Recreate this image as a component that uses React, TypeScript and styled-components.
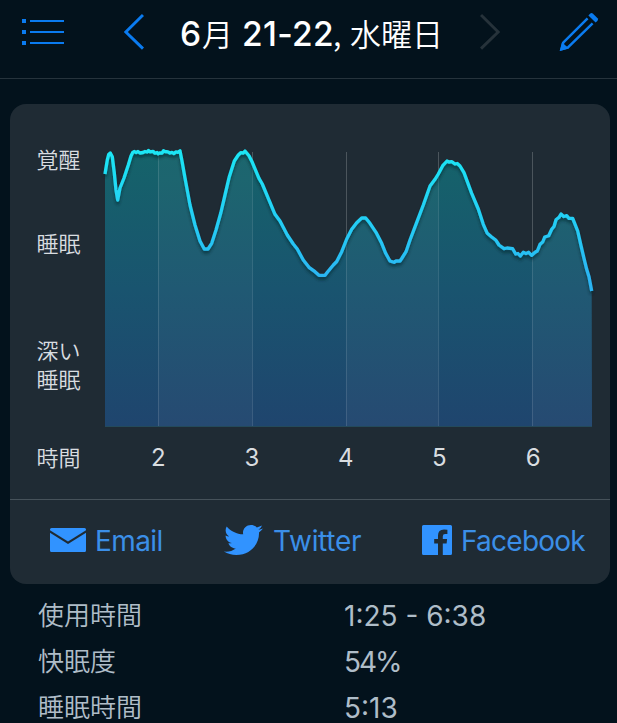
import React from "react";
import styled, { createGlobalStyle } from "styled-components";
import { FaTwitter } from "react-icons/fa";

const GlobalStyle = createGlobalStyle`
  html, body { margin: 0; padding: 0; background: #03121c; overflow: hidden; }
  * { box-sizing: border-box; }
`;

const Screen = styled.main`
  width: 617px;
  height: 723px;
  overflow: hidden;
  background: #03121c;
  font-family: Inter, "Noto Sans CJK JP", sans-serif;
  -webkit-font-smoothing: antialiased;
`;

const Header = styled.header`
  display: flex;
  align-items: flex-start;
  height: 79px;
  padding: 12px 18px 0 22px;
  border-bottom: 1px solid #26333c;
`;

const IconButton = styled.button<{ $gap?: number }>`
  display: block;
  padding: 0;
  border: 0;
  background: none;
  margin-left: ${(p) => p.$gap ?? 0}px;
  line-height: 0;
`;

const Title = styled.h1`
  display: flex;
  width: 262px;
  height: 44px;
  margin: 0 0 0 36px;
  font-size: 33.5px;
  line-height: 44px;
  font-weight: 500;
  color: #fff;
  white-space: pre;
`;

const Latin = styled.span<{ $width: number; $track?: number }>`
  width: ${(p) => p.$width}px;
  letter-spacing: ${(p) => p.$track ?? 0}px;
`;

const Kanji = styled.span<{ $width: number }>`
  width: ${(p) => p.$width}px;
  line-height: 41px;
  font-family: "Noto Sans CJK JP", sans-serif;
  font-size: 31px;
  font-weight: 350;
`;

const Card = styled.section`
  width: 600px;
  height: 480px;
  margin: 25px 0 0 10px;
  border-radius: 16px;
  background: #1f2b34;
  overflow: hidden;
`;

const ChartArea = styled.div`
  display: grid;
  grid-template-columns: 95px 1fr;
  grid-template-rows: 335px 60px;
  height: 396px;
  border-bottom: 1px solid #46525a;
`;

const StageList = styled.div`
  display: flex;
  flex-direction: column;
  padding: 40px 0 0 26.5px;
`;

const AxisLabel = styled.div<{ $top?: number }>`
  margin-top: ${(p) => p.$top ?? 0}px;
  font-family: "Noto Sans CJK JP", sans-serif;
  font-size: 22px;
  line-height: 29px;
  font-weight: 350;
  color: #d9dde0;
  white-space: pre-line;
`;

const HourLabel = styled(AxisLabel)`
  padding: 3px 0 0 26.5px;
`;

const Plot = styled.svg`
  display: block;
  width: 505px;
  height: 335px;
`;

const Hours = styled.div`
  display: grid;
  grid-template-columns: repeat(5, 93.7px);
  padding: 4px 0 0 6.5px;
  text-align: center;
  font-size: 24px;
  line-height: 30px;
  color: #d9dde0;
`;

const ShareBar = styled.nav`
  display: flex;
  height: 84px;
  padding: 25px 0 0 40px;
`;

const ShareLink = styled.a<{ $width: number; $gap: number; $track: number }>`
  display: flex;
  align-items: flex-start;
  gap: ${(p) => p.$gap}px;
  width: ${(p) => p.$width}px;
  height: 32px;
  color: #3193ff;
  font-size: 28px;
  line-height: 32px;
  letter-spacing: ${(p) => p.$track}px;
  white-space: nowrap;
  svg { flex: none; display: block; }
`;

const TwitterIcon = styled(FaTwitter)`
  width: 39px;
  height: 30px;
`;

const ShareText = styled.span`
  color: #3b8fe8;
`;

const Stats = styled.dl`
  margin: 9px 0 0;
  padding-left: 38px;
`;

const StatRow = styled.div`
  display: grid;
  grid-template-columns: 306px 1fr;
  height: 46px;
  color: #afbdc8;
`;

const StatName = styled.dt`
  font-family: "Noto Sans CJK JP", sans-serif;
  font-size: 26px;
  line-height: 42px;
  font-weight: 350;
`;

const StatValue = styled.dd<{ $track: number }>`
  margin: 0;
  font-size: 28px;
  line-height: 46px;
  letter-spacing: ${(p) => p.$track}px;
`;

const LINE =
  "105,174 107.3,160 108.7,154.5 110.3,153 112.3,156.7 114.3,173 116,190 117.7,200 120,188 124,178 128.3,165 131,156 132.7,152.5 134.5,151.5 136,152.5 138,151.5 140,153 143,152.5 145,151.5 147,152 148.5,150.5 150,151.8 153,151.3 155,153.2 157,152.5 158,153.8 160,152.8 162,153 163.5,150.8 165,151.5 168,151.8 170,153 172,152.3 174,153.5 176,151.8 178,152.3 180,150.8 182,161 185,178 190,205 195,225 200,241 204.3,249 208,249 211.7,243.3 216,230 220.7,213.3 225,195 229.3,176.7 234.3,161 238.3,155 240.7,152.7 243.3,153 245,151 246.7,153 249,155.7 252.3,162.3 259,178.3 262.3,184 268.3,198.3 275,214.3 280,221 287.3,235 293.3,244 297.3,249 303.3,260 309,267.3 315,271.7 319,275.3 325,275.3 327.7,271.7 333.3,265 336.7,261.5 341.7,251.7 346.7,239 351.7,229.3 356.7,222.7 361.7,218 365.7,218 370,223.3 376,232.3 381.7,243.3 385.7,253.3 390,261 394,262.3 396,261 400,261 402,258 406,251.7 410,240 416.7,222.3 423.3,205 430,186 435,179.3 438.3,174 442.7,165.7 447,161 449,162 452,161.7 455,164 457.3,163.5 460,166 464,172.7 471.7,193.3 478.3,209 483.3,224.3 487.3,233.3 491.7,237 496,240.3 499,245 504,248.7 507,248 512.7,248.7 515.7,254 518,253.5 520.3,256 523.3,252.3 526,253.5 528.7,252.3 531.7,255.3 535,252.3 537.3,251 540,244.3 542.7,242 544.7,237 548.7,235.7 551.7,229.3 554,226.5 556,219.7 559,217.3 561,214 563.7,216.5 566.7,215.7 569,218.3 572.7,218.3 577.7,231 581,245.7 584,258.3 586.7,269.3 589,276.7 591.7,291";

const GRID = [158.5, 252.5, 346.5, 438.5, 532.5];

function SleepChart() {
  return (
    <Plot viewBox="105 104 505 335" overflow="visible">
      <defs>
        <linearGradient id="fill" x1="0" y1="152" x2="0" y2="426" gradientUnits="userSpaceOnUse">
          <stop offset="0" stopColor="#15636a" />
          <stop offset="0.5" stopColor="#19546f" />
          <stop offset="1" stopColor="#1f456e" />
        </linearGradient>
        <linearGradient id="stroke" x1="0" y1="152" x2="0" y2="280" gradientUnits="userSpaceOnUse">
          <stop offset="0" stopColor="#1ce6f5" />
          <stop offset="0.6" stopColor="#25cbf5" />
          <stop offset="1" stopColor="#2bb4f3" />
        </linearGradient>
        <clipPath id="area">
          <polygon points={`105,427 ${LINE} 592,427`} />
        </clipPath>
        <filter id="shadow" x="-5%" y="-5%" width="110%" height="120%">
          <feDropShadow dx="0" dy="3" stdDeviation="1.8" floodColor="#04252f" floodOpacity="0.6" />
        </filter>
      </defs>
      {GRID.map((x) => (
        <line key={x} x1={x} x2={x} y1="152" y2="427" stroke="#4b555c" />
      ))}
      <g clipPath="url(#area)">
        <rect x="105" y="150" width="487" height="277" fill="url(#fill)" />
        <rect x="158" y="150" width="94" height="277" fill="#fff" opacity=".03" />
        <rect x="346" y="150" width="92" height="277" fill="#fff" opacity=".03" />
        <rect x="532" y="150" width="60" height="277" fill="#fff" opacity=".03" />
        {GRID.map((x) => (
          <line key={x} x1={x} x2={x} y1="152" y2="427" stroke="#fff" opacity=".12" />
        ))}
        <rect x="105" y="426" width="487" height="1" fill="#244a5b" />
      </g>
      <polyline
        points={LINE}
        fill="none"
        stroke="url(#stroke)"
        strokeWidth="3.3"
        strokeLinejoin="round"
        filter="url(#shadow)"
      />
    </Plot>
  );
}

const STATS: { name: string; value: string; track: number }[] = [
  { name: "使用時間", value: "1:25 - 6:38", track: 0 },
  { name: "快眠度", value: "54%", track: -2 },
  { name: "睡眠時間", value: "5:13", track: 0 },
];

export default function App() {
  return (
    <Screen>
      <GlobalStyle />
      <Header>
        <IconButton aria-label="List">
          <svg width="42" height="40" viewBox="22 12 42 40" fill="#0a7bf0">
            <path d="M22 19h4v4h-4zM22 30h4v4h-4zM22 41h4v4h-4z" />
            <path d="M30 20h34v2H30zM30 31h34v2H30zM30 42h34v2H30z" />
          </svg>
        </IconButton>
        <IconButton aria-label="Previous" $gap={60}>
          <svg width="20" height="40" viewBox="124 12 20 40" fill="none" stroke="#0a7bf0" strokeWidth="3">
            <path d="M143 15L125.8 32L143 48.6" />
          </svg>
        </IconButton>
        <Title>
          <Latin $width={22}>6</Latin>
          <Kanji $width={40}>月</Kanji>
          <Latin $width={91} $track={0.3}>21-22</Latin>
          <Kanji $width={17}>,</Kanji>
          <Kanji $width={92}>水曜日</Kanji>
        </Title>
        <IconButton aria-label="Next" $gap={38}>
          <svg width="20" height="40" viewBox="480 12 20 40" fill="none" stroke="#26323a" strokeWidth="3">
            <path d="M481 15L498.2 32L481 48.6" />
          </svg>
        </IconButton>
        <IconButton aria-label="Edit" $gap={59}>
          <svg width="41" height="40" viewBox="559 12 41 40" fill="none" stroke="#0a7bf0" strokeWidth="2.5">
            <path d="M587.6 18.4L563.2 42.6L561.4 49.2L568 47.4L592.6 23.4" />
            <path d="M562 42.2L560 51L568.8 48.6Z" fill="#0a7bf0" stroke="none" />
            <path d="M588.4 15.4L590.3 13.6Q591.6 12.5 593 13.7L597.6 18.3Q598.6 19.6 597.4 20.9L595.6 22.6Z" fill="#0a7bf0" stroke="none" />
          </svg>
        </IconButton>
      </Header>

      <Card>
        <ChartArea>
          <StageList>
            <AxisLabel>覚醒</AxisLabel>
            <AxisLabel $top={55}>睡眠</AxisLabel>
            <AxisLabel $top={78}>{"深い\n睡眠"}</AxisLabel>
          </StageList>
          <SleepChart />
          <HourLabel>時間</HourLabel>
          <Hours>
            {[2, 3, 4, 5, 6].map((h) => (
              <span key={h}>{h}</span>
            ))}
          </Hours>
        </ChartArea>
        <ShareBar>
          <ShareLink $width={174} $gap={9} $track={-0.6}>
            <svg width="36" height="32" viewBox="50 525 36 32" fill="#3193ff">
              <path d="M51.5 528H84.5Q86 528 86 529.5V530.3L68 541.4L50 530.3V529.5Q50 528 51.5 528Z" />
              <path d="M50 532.8L68 543.9L86 532.8V550.5Q86 552 84.5 552H51.5Q50 552 50 550.5Z" />
            </svg>
            <ShareText>Email</ShareText>
          </ShareLink>
          <ShareLink $width={198} $gap={10} $track={-0.3}>
            <TwitterIcon viewBox="0 48 512 416" preserveAspectRatio="none" />
            <ShareText>Twitter</ShareText>
          </ShareLink>
          <ShareLink $width={165} $gap={9} $track={-0.75}>
            <svg width="30" height="30" viewBox="0 0 30 30" fill="#3193ff">
              <path d="M1.5 0H28.5Q30 0 30 1.5V28.5Q30 30 28.5 30H20.8V18.5H24.6L25.1 14H20.8V11.2Q20.8 8.9 23.1 8.9H25.4V4.8Q24 4.5 22 4.5Q16 4.7 16 10.5V14H12.2V18.5H16V30H1.5Q0 30 0 28.5V1.5Q0 0 1.5 0Z" />
            </svg>
            <ShareText>Facebook</ShareText>
          </ShareLink>
        </ShareBar>
      </Card>

      <Stats>
        {STATS.map(({ name, value, track }) => (
          <StatRow key={name}>
            <StatName>{name}</StatName>
            <StatValue $track={track}>{value}</StatValue>
          </StatRow>
        ))}
      </Stats>
    </Screen>
  );
}
